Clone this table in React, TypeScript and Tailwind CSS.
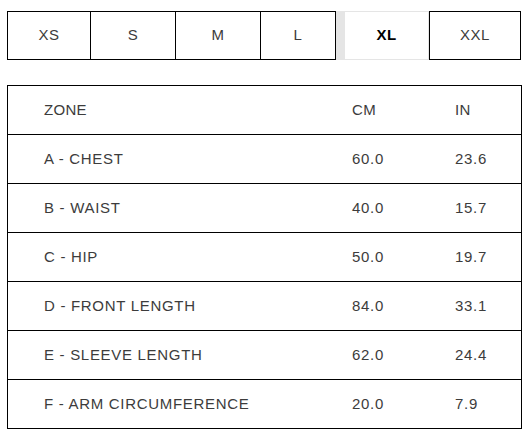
import React from 'react';

const sizes = [
  { label: 'XS', w: 'w-[84px]' },
  { label: 'S', w: 'w-[85px]' },
  { label: 'M', w: 'w-[85px]' },
  { label: 'L', w: 'w-[75px]' },
  { label: 'XL', w: 'w-[93px]', active: true },
  { label: 'XXL', w: 'w-[92px]' },
];

const rows = [
  ['A - CHEST', '60.0', '23.6'],
  ['B - WAIST', '40.0', '15.7'],
  ['C - HIP', '50.0', '19.7'],
  ['D - FRONT LENGTH', '84.0', '33.1'],
  ['E - SLEEVE LENGTH', '62.0', '24.4'],
  ['F - ARM CIRCUMFERENCE', '20.0', '7.9'],
];

export default function App() {
  return (
    <div className="w-[531px] h-[442px] bg-white pt-[11px] pl-[7px] font-['Liberation_Sans',Arial,sans-serif] text-[#3c3c3c] text-[15px]">
      {/* Size tabs */}
      <div className="flex h-[49px] w-[514px]">
        {sizes.map((s, i) =>
          s.active ? (
            <div
              key={s.label}
              className={`${s.w} flex items-center justify-center border border-l-[9px] border-[#e5e5e5] font-bold text-black tracking-[0.3px]`}
            >
              {s.label}
            </div>
          ) : (
            <div
              key={s.label}
              className={`${s.w} flex items-center justify-center border-y border-r border-black tracking-[0.5px] ${
                i === 0 || sizes[i - 1].active ? 'border-l' : ''
              }`}
            >
              {s.label}
            </div>
          )
        )}
      </div>

      {/* Measurement table */}
      <div className="mt-[25px] w-[515px] border border-black">
        <div className="flex h-[48px] items-center tracking-[0.3px]">
          <div className="w-[344px] pl-[36px]">ZONE</div>
          <div className="w-[103px]">CM</div>
          <div>IN</div>
        </div>
        {rows.map((r) => (
          <div key={r[0]} className="flex h-[49px] items-center border-t border-black tracking-[0.7px]">
            <div className="w-[344px] pl-[36px]">{r[0]}</div>
            <div className="w-[103px]">{r[1]}</div>
            <div>{r[2]}</div>
          </div>
        ))}
      </div>
    </div>
  );
}
